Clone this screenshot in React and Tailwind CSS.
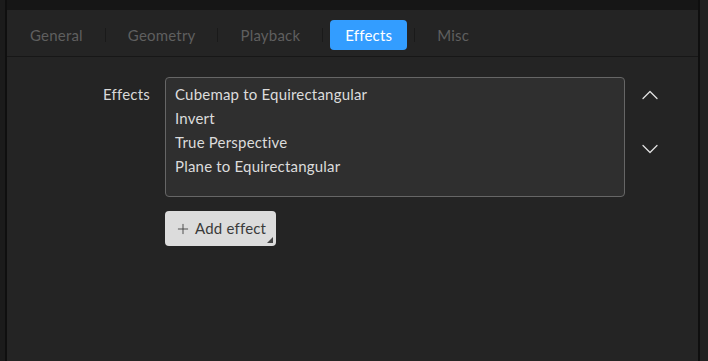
import { ChevronUp, ChevronDown, Plus } from 'lucide-react';

const tabs = ['General', 'Geometry', 'Playback', 'Effects', 'Misc'];
const effects = [
  'Cubemap to Equirectangular',
  'Invert',
  'True Perspective',
  'Plane to Equirectangular',
];

export default function App() {
  return (
    <div
      className="w-[708px] h-[361px] bg-[#1b1b1b] flex overflow-hidden tracking-[0.2px]"
      style={{ fontFamily: 'Lato, "Open Sans", sans-serif' }}
    >
      <div className="w-[5px] bg-[#1b1b1b]" />
      <div className="w-[2px] bg-[#0f0f0f]" />
      <div className="flex-1 flex flex-col">
        <div className="h-[10px] bg-[#161616]" />
        <div className="flex-1 bg-[#242424] flex flex-col">
          <div className="h-[47px] flex items-start pt-[10px] pl-[8px] border-b border-[#171717]">
            {tabs.map((t, i) => (
              <div key={t} className="flex items-center">
                {i > 0 && <div className="w-px h-[14px] bg-[#1a1a1a] mx-[7px]" />}
                <div
                  className={
                    t === 'Effects'
                      ? 'h-[30px] px-[15px] flex items-center rounded-[4px] bg-[#339dff] text-white text-[15px]'
                      : 'h-[30px] px-[15px] flex items-center text-[#5f5f5f] text-[15px]'
                  }
                >
                  {t}
                </div>
              </div>
            ))}
          </div>
          <div className="flex pt-[20px]">
            <div className="w-[143px] text-right text-[15px] text-[#d8d8d8] pt-[6px]">
              Effects
            </div>
            <div className="ml-[15px] flex flex-col">
              <div className="w-[460px] h-[120px] rounded-[4px] border border-[#666] bg-[#2f2f2f] pt-[4px] pl-[9px]">
                {effects.map((e) => (
                  <div key={e} className="h-[24px] flex items-center text-[15px] text-[#dcdcdc]">
                    {e}
                  </div>
                ))}
              </div>
              <button className="relative mt-[14px] w-[111px] h-[35px] rounded-[4px] bg-[#dcdcdc] flex items-center pl-[10px] gap-[4px] text-[15px] text-[#3a3a3a]">
                <Plus size={16} strokeWidth={1.3} />
                Add effect
                <span className="absolute right-[3px] bottom-[3px] w-0 h-0 border-l-[6px] border-l-transparent border-b-[6px] border-b-[#444]" />
              </button>
            </div>
            <div className="ml-[11px] flex flex-col items-center text-[#e0e0e0]">
              <ChevronUp size={28} strokeWidth={1.1} className="mt-[4px]" />
              <ChevronDown size={28} strokeWidth={1.1} className="mt-[26px]" />
            </div>
          </div>
        </div>
      </div>
      <div className="w-[2px] bg-[#0f0f0f]" />
      <div className="w-[8px] bg-[#222]" />
    </div>
  );
}
